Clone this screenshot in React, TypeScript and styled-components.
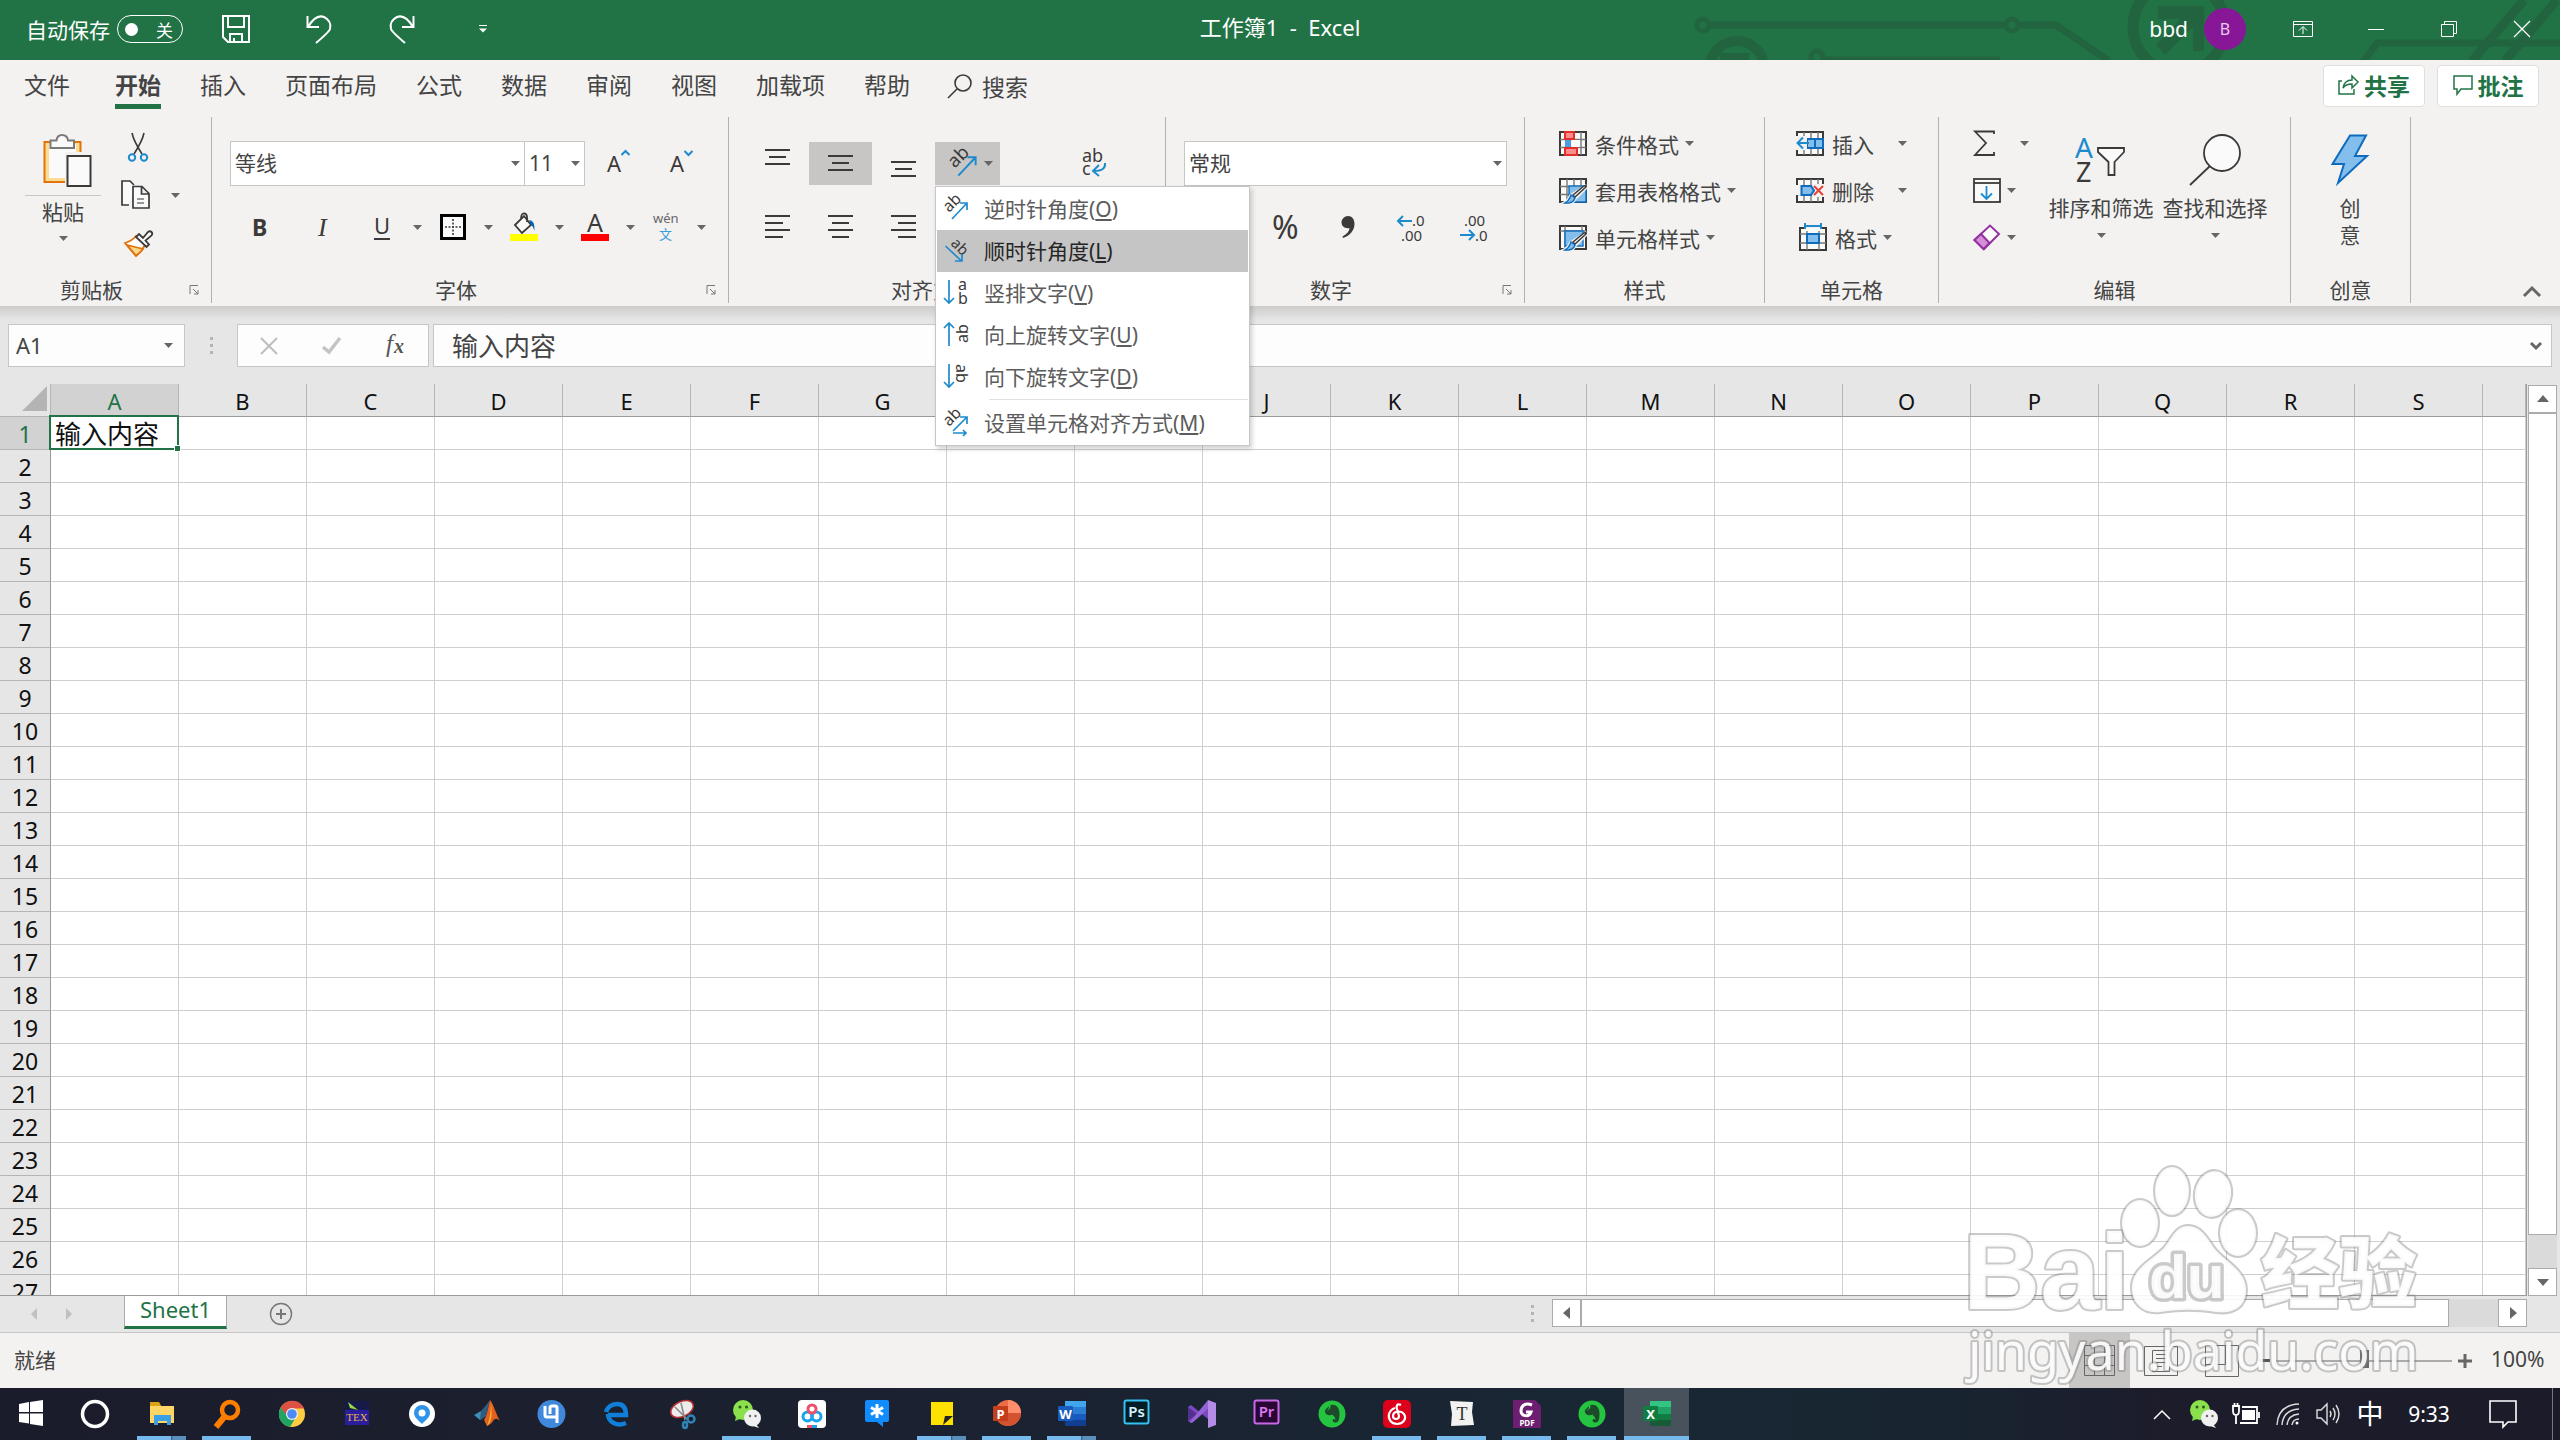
import React from 'react';
import styled, { createGlobalStyle, css } from 'styled-components';

const FONT = '"Noto Sans", "Noto Sans CJK SC", sans-serif';
const INK = '#444444';
const DARK = '#3b3a39';
const BLUE = '#1e8bcd';
const GREEN = '#217346';

const Global = createGlobalStyle`
  *, *::before, *::after { box-sizing: border-box; }
  body { margin: 0; font-family: ${FONT}; font-size: 21px; color: ${INK}; }
  button, input, select { font: inherit; color: inherit; margin: 0; padding: 0; border: 0; background: none; border-radius: 0; outline: 0; }
  button { cursor: pointer; }
  svg { display: block; flex: none; overflow: visible; }
`;

const Page = styled.div`
  position: relative;
  display: flex;
  flex-direction: column;
  height: 100vh;
  overflow: hidden;
  background: #e6e6e6;
`;

const Row = styled.div<{ $gap?: number; $left?: number }>`
  display: flex;
  align-items: center;
  gap: ${(p) => p.$gap ?? 0}px;
  padding-left: ${(p) => p.$left ?? 0}px;
`;

/* ---------- title bar ---------- */
const TitleBar = styled.header`
  position: relative;
  display: grid;
  grid-template-columns: 1fr auto 1fr;
  align-items: center;
  flex: none;
  height: 60px;
  padding-bottom: 2px;
  background: ${GREEN};
  color: #fff;
  overflow: hidden;
`;
const Circuit = styled.svg`
  position: absolute;
  right: 0;
  top: 0;
`;
const TitleText = styled.h1`
  margin: 0;
  padding-bottom: 6px;
  font-size: 22px;
  font-weight: 400;
  white-space: pre;
`;
const AutoSave = styled.label`
  display: flex;
  align-items: center;
  gap: 7px;
  padding-left: 26px;
`;
const Toggle = styled.span`
  display: flex;
  align-items: center;
  justify-content: space-between;
  width: 66px;
  height: 28px;
  padding: 0 9px 0 7px;
  border: 1px solid #fff;
  border-radius: 14px;
  font-size: 17px;
`;
const HiddenCheck = styled.input`
  appearance: none;
  width: 13px;
  height: 13px;
  border-radius: 50%;
  background: #fff;
`;
const QuickButton = styled.button<{ $w: number }>`
  display: flex;
  justify-content: center;
  align-items: center;
  width: ${(p) => p.$w}px;
  height: 58px;
`;
const TitleRight = styled.div`
  position: relative;
  display: flex;
  justify-content: flex-end;
  align-items: center;
  padding-right: 2px;
`;
const UserName = styled.span`
  padding-right: 16px;
  font-size: 21px;
`;
const Avatar = styled.button`
  width: 42px;
  height: 42px;
  margin-right: 20px;
  border-radius: 50%;
  background: #881798;
  color: #e6cdea;
  font-size: 16px;
`;
const WindowButton = styled.button`
  display: flex;
  justify-content: center;
  align-items: center;
  width: 73px;
  height: 56px;
`;

/* ---------- ribbon tabs ---------- */
const TabBar = styled.nav`
  display: flex;
  align-items: flex-start;
  flex: none;
  height: 57px;
  padding: 5px 21px 0 24px;
  background: #f3f2f1;
`;
const TabButton = styled.button<{ $on?: boolean; $first?: boolean }>`
  height: 44px;
  margin-right: ${(p) => (p.$first ? 45 : 39)}px;
  padding-top: 1px;
  font-size: 23px;
  line-height: 36px;
  border-bottom: 5px solid ${(p) => (p.$on ? GREEN : 'transparent')};
  font-weight: ${(p) => (p.$on ? 700 : 400)};
`;
const SearchButton = styled.button`
  display: flex;
  align-items: center;
  gap: 10px;
  height: 42px;
  margin-left: -2px;
  font-size: 23px;
`;
const Spacer = styled.div`
  flex: 1;
`;
const ShareButton = styled.button`
  display: flex;
  justify-content: center;
  align-items: center;
  gap: 5px;
  width: 102px;
  height: 42px;
  margin-left: 12px;
  padding-bottom: 2px;
  border: 1px solid #e1dfdd;
  border-radius: 4px;
  background: #fff;
  color: ${GREEN};
  font-size: 23px;
  font-weight: 700;
`;

/* ---------- ribbon ---------- */
const Ribbon = styled.section`
  position: relative;
  z-index: 2;
  display: flex;
  flex: none;
  height: 189px;
  padding-bottom: 3px;
  background: #f3f2f1;
`;
const GroupBox = styled.div<{ $w: number }>`
  display: flex;
  flex-direction: column;
  flex: none;
  width: ${(p) => p.$w}px;
  border-right: 1px solid #b3b0ad;
`;
const GroupBody = styled.div<{ $left?: number; $gap?: number }>`
  display: flex;
  flex: 1;
  gap: ${(p) => p.$gap ?? 0}px;
  padding-left: ${(p) => p.$left ?? 0}px;
`;
const GroupFoot = styled.div`
  display: flex;
  align-items: center;
  height: 26px;
`;
const GroupLabel = styled.span`
  flex: 1;
  text-align: center;
  line-height: 26px;
`;
const Launcher = styled.button`
  display: flex;
  justify-content: center;
  align-items: center;
  width: 28px;
  height: 22px;
  padding-right: 6px;
`;
const Stack = styled.div<{ $top?: number; $left?: number; $w?: number }>`
  display: flex;
  flex-direction: column;
  width: ${(p) => (p.$w ? p.$w + 'px' : 'auto')};
  padding-top: ${(p) => p.$top ?? 0}px;
  padding-left: ${(p) => p.$left ?? 0}px;
`;
const ToolRow = styled.div<{ $left?: number; $h?: number }>`
  display: flex;
  align-items: center;
  height: ${(p) => p.$h ?? 64}px;
  padding-left: ${(p) => p.$left ?? 0}px;
`;
const Tool = styled.button<{ $w?: number; $h?: number; $on?: boolean }>`
  display: flex;
  justify-content: center;
  align-items: center;
  width: ${(p) => p.$w ?? 63}px;
  height: ${(p) => p.$h ?? 43}px;
  background: ${(p) => (p.$on ? '#c8c6c4' : 'transparent')};
`;
const BigTool = styled.button<{ $w: number }>`
  display: flex;
  flex-direction: column;
  align-items: center;
  width: ${(p) => p.$w}px;
  padding-top: 17px;
  line-height: 27px;
  white-space: nowrap;
`;
const BigIcon = styled.span<{ $left?: number }>`
  display: flex;
  justify-content: center;
  height: 61px;
  padding-left: ${(p) => p.$left ?? 0}px;
`;
const PasteLabel = styled.span`
  width: 100%;
  padding: 3px 0 10px;
  border-top: 1px solid #c8c6c4;
`;
const BigGap = styled.span`
  height: 11px;
`;
const WideTool = styled.button<{ $gap?: number; $left?: number }>`
  display: flex;
  align-items: center;
  height: 47px;
  gap: 8px;
  padding-bottom: 2px;
  padding-left: ${(p) => p.$left ?? 0}px;
  & > svg:last-child { margin-left: ${(p) => (p.$gap ?? 6) - 8}px; }
`;
const ComboBox = styled.label<{ $w: number; $joined?: boolean }>`
  display: grid;
  align-items: center;
  width: ${(p) => p.$w}px;
  height: 45px;
  border: 1px solid #c8c6c4;
  border-left-width: ${(p) => (p.$joined ? 0 : 1)}px;
  background: #fff;
  & > select, & > svg { grid-area: 1 / 1; }
  & > svg { justify-self: end; margin-right: 4px; pointer-events: none; }
`;
const Choice = styled.select`
  appearance: none;
  width: 100%;
  height: 43px;
  padding-left: 4px;
`;
const CollapseArea = styled.div`
  display: flex;
  flex: 1;
  justify-content: flex-end;
  align-items: flex-end;
  padding: 0 19px 5px 0;
`;

/* ---------- orientation menu ---------- */
const MenuAnchor = styled.div`
  position: relative;
`;
const Menu = styled.ul`
  position: absolute;
  left: 0;
  top: 44px;
  width: 315px;
  margin: 0;
  padding: 1px;
  list-style: none;
  border: 1px solid #c6c6c6;
  background: #fff;
  box-shadow: 2px 3px 5px rgba(0, 0, 0, 0.18);
`;
const MenuItem = styled.button<{ $on?: boolean }>`
  display: flex;
  align-items: center;
  gap: 15px;
  width: 100%;
  height: 42px;
  padding: 0 0 2px 7px;
  background: ${(p) => (p.$on ? '#c5c5c5' : 'transparent')};
  color: ${(p) => (p.$on ? '#262626' : '#5c5c5c')};
  white-space: nowrap;
`;
const MenuRule = styled.li`
  height: 1px;
  margin: 1px 0 2px 52px;
  background: #e1e1e1;
`;

/* ---------- formula bar ---------- */
const FormulaBar = styled.section`
  display: flex;
  flex: none;
  height: 78px;
  padding: 18px 8px 16px;
  background: linear-gradient(#cdcccb, #e6e6e6 14px);
`;
const Field = styled.div<{ $w?: number }>`
  display: flex;
  align-items: center;
  flex: ${(p) => (p.$w ? 'none' : '1')};
  width: ${(p) => (p.$w ? p.$w + 'px' : 'auto')};
  height: 43px;
  border: 1px solid #c6c6c6;
  background: #fdfdfd;
`;
const NameInput = styled.input`
  flex: 1;
  min-width: 0;
  padding: 0 0 2px 7px;
  font-size: 22px;
`;
const FormulaInput = styled.input`
  flex: 1;
  padding: 0 0 2px 18px;
  font-size: 26px;
`;
const Grip = styled.div<{ $w: number }>`
  display: flex;
  justify-content: center;
  align-items: center;
  width: ${(p) => p.$w}px;
`;

/* ---------- sheet ---------- */
const SheetArea = styled.main`
  display: flex;
  flex: 1;
  min-height: 0;
`;
const GridClip = styled.div`
  flex: 1;
  overflow: hidden;
  border-right: 1px solid #9b9b9b;
  border-bottom: 1px solid #9b9b9b;
  background: #fff;
`;
const Grid = styled.table`
  width: 100%;
  table-layout: fixed;
  border-spacing: 0;
  color: #111;
`;
const ColHead = styled.th<{ $on?: boolean }>`
  height: 33px;
  padding: 2px 0 0;
  font-size: 22px;
  line-height: 30px;
  font-weight: 400;
  border-right: 1px solid #b5b5b5;
  border-bottom: 1px solid #9b9b9b;
  background: ${(p) => (p.$on ? '#d2d2d2' : '#e6e6e6')};
  color: ${(p) => (p.$on ? GREEN : '#111')};
`;
const CornerHead = styled.th`
  padding: 0 3px 3px 0;
  background: #e6e6e6;
  border-bottom: 1px solid #b5b5b5;
  border-right: 1px solid #b5b5b5;
  & > svg { margin-left: auto; }
`;
const RowHead = styled.th<{ $on?: boolean }>`
  height: 33px;
  padding: 2px 0 0;
  font-size: 23px;
  line-height: 30px;
  font-weight: 400;
  border-right: 1px solid #9b9b9b;
  border-bottom: 1px solid #b5b5b5;
  background: ${(p) => (p.$on ? '#d2d2d2' : '#e6e6e6')};
  color: ${(p) => (p.$on ? GREEN : '#111')};
`;
const Cell = styled.td<{ $active?: boolean }>`
  padding: 2px 0 0 4px;
  line-height: 30px;
  font-size: 26px;
  white-space: nowrap;
  background: #fff;
  border-right: 1px solid #cfcfcf;
  border-bottom: 1px solid #cfcfcf;
  ${(p) =>
    p.$active &&
    css`
      position: relative;
      &::before {
        content: '';
        position: absolute;
        inset: -2px -1px -1px -2px;
        border: 2px solid ${GREEN};
      }
      &::after {
        content: '';
        position: absolute;
        right: -3px;
        bottom: -3px;
        width: 7px;
        height: 7px;
        border: 1px solid #fff;
        background: ${GREEN};
      }
    `}
`;
const VScroll = styled.div`
  display: flex;
  flex-direction: column;
  width: 33px;
  padding: 1px 3px 0 1px;
`;
const ScrollButton = styled.button`
  display: flex;
  justify-content: center;
  align-items: center;
  flex: none;
  width: 29px;
  height: 28px;
  border: 1px solid #ababab;
  background: #fff;
`;
const ScrollThumb = styled.div`
  flex: 1;
  border: 1px solid #ababab;
  background: #fff;
`;
const ScrollTrack = styled.div<{ $w?: number; $h?: number }>`
  flex: none;
  width: ${(p) => (p.$w ? p.$w + 'px' : 'auto')};
  height: ${(p) => (p.$h ? p.$h + 'px' : 'auto')};
  background: #dadada;
`;
const SheetBar = styled.section`
  display: flex;
  flex: none;
  height: 37px;
  padding-right: 33px;
  border-bottom: 1px solid #c6c6c6;
`;
const SheetNav = styled.div`
  display: flex;
  align-items: center;
  gap: 26px;
  width: 124px;
  padding-left: 28px;
`;
const SheetTab = styled.button`
  width: 103px;
  height: 33px;
  padding-bottom: 4px;
  border: 1px solid #ababab;
  border-top: 0;
  border-bottom: 3px solid ${GREEN};
  background: #fff;
  color: ${GREEN};
  font-size: 22px;
  line-height: 26px;
`;
const AddSheet = styled.button`
  display: flex;
  align-items: center;
  padding-left: 42px;
`;
const HScroll = styled.div`
  display: flex;
  width: 975px;
  height: 28px;
  margin-top: 3px;
`;

/* ---------- status bar ---------- */
const StatusBar = styled.footer`
  display: flex;
  align-items: center;
  flex: none;
  height: 55px;
  padding: 0 15px 0 14px;
  background: #f3f2f1;
`;
const StatusText = styled.span`
  padding-bottom: 3px;
`;
const ViewButton = styled.button<{ $on?: boolean }>`
  display: flex;
  justify-content: center;
  align-items: center;
  width: 61px;
  height: 55px;
  background: ${(p) => (p.$on ? '#c8c6c4' : 'transparent')};
`;
const ZoomButton = styled.button<{ $w: number }>`
  display: flex;
  justify-content: center;
  width: ${(p) => p.$w}px;
`;
const ZoomRange = styled.input`
  appearance: none;
  width: 176px;
  height: 20px;
  &::-webkit-slider-runnable-track { height: 2px; background: #ababab; }
  &::-webkit-slider-thumb {
    appearance: none;
    width: 9px;
    height: 18px;
    margin-top: -10px;
    background: #6b6b6b;
  }
`;
const ZoomText = styled.span`
  width: 54px;
  margin-left: 13px;
  padding-bottom: 3px;
  white-space: nowrap;
`;

/* ---------- task bar ---------- */
const TaskBar = styled.footer`
  display: flex;
  flex: none;
  height: 52px;
  background: linear-gradient(90deg, #1b1c2b 0%, #1b2130 35%, #192734 65%, #182531 75%, #1d1c2b 85%, #1c1b29 100%);
  color: #fff;
`;
const TaskButton = styled.button<{ $w?: number; $on?: boolean }>`
  display: flex;
  flex-direction: column;
  align-items: center;
  justify-content: space-between;
  width: ${(p) => p.$w ?? 65}px;
  padding-top: 11px;
  background: ${(p) => (p.$on ? 'rgba(255,255,255,0.2)' : 'transparent')};
`;
const Underline = styled.span<{ $kind: number }>`
  width: ${(p) => (p.$kind === 3 ? '100%' : '49px')};
  height: 4px;
  background: ${(p) =>
    p.$kind === 0
      ? 'transparent'
      : p.$kind === 2
      ? 'linear-gradient(90deg, #76b9ed 34px, #34516b 34px, #5a8fbc 36px)'
      : '#76b9ed'};
`;
const TrayButton = styled.button<{ $w: number }>`
  display: flex;
  justify-content: center;
  align-items: center;
  width: ${(p) => p.$w}px;
  font-size: 21px;
`;
const InputMode = styled.span`
  font-size: 27px;
  line-height: 50px;
`;
const DesktopPeek = styled.button`
  width: 8px;
  margin-left: 14px;
  border-left: 1px solid #77777f;
`;

const Watermark = styled.svg`
  position: absolute;
  right: 120px;
  bottom: 50px;
  z-index: 3;
  pointer-events: none;
`;

/* ---------- icons ---------- */
type IconProps = { w: number; h: number; children: React.ReactNode; c?: string; s?: number };
const Icon = ({ w, h, children, c = DARK, s = 2 }: IconProps) => (
  <svg width={w} height={h} viewBox={`0 0 ${w} ${h}`} fill="none" stroke={c} strokeWidth={s} aria-hidden="true">
    {children}
  </svg>
);
const Tri = () => (
  <svg width="9" height="5" viewBox="0 0 9 5" aria-hidden="true">
    <path d="M0 0h9L4.500 5z" fill="#666" />
  </svg>
);
const Lines = ({ rows }: { rows: [number, number][] }) => (
  <Icon w={25} h={rows.length * 7 - 4}>
    {rows.map(([x, w], i) => (
      <path key={i} d={`M${x} ${i * 7 + 1}h${w}`} />
    ))}
  </Icon>
);
const T = ({ x, y, size, fill = DARK, children, ...rest }: any) => (
  <text x={x} y={y} fontSize={size} fill={fill} stroke="none" {...rest}>
    {children}
  </text>
);

const PasteIcon = () => (
  <Icon w={50} h={54}>
    <rect x="1.500" y="8" width="36" height="40" fill="#fbdc93" stroke="#e3720b" />
    <rect x="6" y="10" width="27" height="34" fill="#fafafa" stroke="none" />
    <path d="M7.500 14V6.500h6C14 2.500 16 1 19 1s5.500 1.500 6 5.500h6V14z" fill="#fafafa" stroke="#7c7a78" />
    <rect x="22" y="18" width="28" height="36" fill="#f3f2f1" stroke="none" />
    <rect x="24.500" y="22" width="23" height="30" fill="#fafafa" />
  </Icon>
);
const CutIcon = () => (
  <Icon w={20} h={29} s={1.6}>
    <path d="M4 0c1 5 3 10 10 21M16 0c-1 5-3 10-10 21" />
    <circle cx="4" cy="24.500" r="3.200" stroke={BLUE} strokeWidth="2" />
    <circle cx="16" cy="24.500" r="3.200" stroke={BLUE} strokeWidth="2" />
  </Icon>
);
const CopyIcon = () => (
  <Icon w={29} h={30} s={1.7}>
    <path d="M8 25H1V1h8l4 4" fill="#fafafa" />
    <path d="M12 6.500h9l7 7V28H12zM20.500 7v7H28" fill="#fafafa" />
    <path d="M16 19h7M16 23h7" stroke="#777" />
  </Icon>
);
const BrushIcon = () => (
  <Icon w={29} h={27} s={1.8}>
    <path d="M1 13q7-2 11-7l9 9q-3 6-9 11z" fill="#fff" stroke="#e3720b" />
    <path d="M3 15l16 4q-3 4-7 6.500z" fill="#fbd98c" stroke="#e3720b" />
    <path d="M12 7l3-3 4 4 5-6q2-1.500 3.500 0t0 3.500l-6 5 3.500 4-2.500 2.500z" fill="#fafafa" />
  </Icon>
);
const GrowIcon = ({ down }: { down?: boolean }) => (
  <Icon w={24} h={28} c={BLUE}>
    <T x={0} y={23} size={22}>A</T>
    <path d={down ? 'M14.500 2l4 4 4-4' : 'M14.500 6l4-4 4 4'} />
  </Icon>
);
const BorderIcon = () => (
  <Icon w={26} h={26}>
    <rect x="1.500" y="1.500" width="23" height="23" fill="#fafafa" stroke="#000" strokeWidth="3" />
    <path d="M5 13h16M13 5v16" strokeDasharray="2 1.500" strokeWidth="1.600" />
  </Icon>
);
const FillIcon = () => (
  <Icon w={28} h={28} s={1.8}>
    <path d="M5 12L14 3l7 9-9 8zM11 6q0-6 3.500-5.500T17 9" fill="#fafafa" />
    <path d="M19 7q6 0 5.500 11-1.500-5-3.500-6z" fill="#0063b1" stroke="none" />
    <path d="M0 21h28v7H0z" fill="#ff0" stroke="none" />
  </Icon>
);
const FontColorIcon = () => (
  <Icon w={28} h={28}>
    <T x={6} y={19} size={25}>A</T>
    <path d="M0 21h28v7H0z" fill="#f00" stroke="none" />
  </Icon>
);
const PinyinIcon = () => (
  <Icon w={26} h={30}>
    <T x={0} y={11} size={13} fill="#666">wén</T>
    <T x={6} y={27} size={13} fill="#3d9bd8">文</T>
  </Icon>
);

const OrientIcon = ({ kind, big }: { kind: string; big?: boolean }) => {
  const k = big ? 1.15 : 1;
  return (
    <svg width={Math.round(25 * k)} height={Math.round(26 * k)} viewBox="0 0 25 26" fill="none" stroke={BLUE} strokeWidth="1.700" aria-hidden="true">
      {(kind === 'ccw' || kind === 'fmt') && (
        <g>
          <T x={0} y={0} size={16} transform="translate(5 18) rotate(-45)">ab</T>
          {kind === 'ccw' ? <path d="M8 24L23 8M16 8h7v7" /> : <path d="M9 22L23 8M16 8h7v7M9 24h13M19 21l3 3-3 3" />}
        </g>
      )}
      {kind === 'cw' && (
        <g>
          <T x={0} y={0} size={15} transform="translate(6 7) rotate(45)">ab</T>
          <path d="M1.500 9l16 15M18 17v7h-7" />
        </g>
      )}
      {kind === 'vert' && (
        <g>
          <T x={14} y={11} size={16}>a</T>
          <T x={14} y={25} size={16}>b</T>
          <path d="M5 1v23M0 19l5 5 5-5" />
        </g>
      )}
      {kind === 'up' && (
        <g>
          <T x={0} y={0} size={16} transform="translate(24 22) rotate(-90)">ab</T>
          <path d="M5 25V2M0 7l5-5 5 5" />
        </g>
      )}
      {kind === 'down' && (
        <g>
          <T x={0} y={0} size={16} transform="translate(12 1) rotate(90)">ab</T>
          <path d="M5 1v23M0 19l5 5 5-5" />
        </g>
      )}
    </svg>
  );
};
const WrapIcon = () => (
  <Icon w={25} h={28} c={BLUE}>
    <T x={0} y={13} size={18}>ab</T>
    <T x={0} y={26} size={18}>c</T>
    <path d="M23 14q1 8-11 8M17 16l-6 6 6 5" />
  </Icon>
);
const IndentIcon = () => (
  <Icon w={25} h={24}>
    <path d="M0 1h25M12 8h13M12 15h13M0 22h25M8 7l-5 5 5 5" />
  </Icon>
);
const MergeIcon = () => (
  <Icon w={26} h={24}>
    <rect x="1" y="1" width="24" height="22" />
    <path d="M1 7h24M1 17h24M6 12h14" />
  </Icon>
);
const DecimalIcon = ({ inc }: { inc?: boolean }) => (
  <Icon w={28} h={28} c={BLUE}>
    {inc ? (
      <g>
        <T x={15} y={13} size={15}>.0</T>
        <T x={4} y={28} size={15}>.00</T>
        <path d="M15 8H1M6 3L1 8l5 5" />
      </g>
    ) : (
      <g>
        <T x={4} y={13} size={15}>.00</T>
        <T x={15} y={28} size={15}>.0</T>
        <path d="M0 22h14M9 17l5 5-5 5" />
      </g>
    )}
  </Icon>
);
const GridBase = () => (
  <g>
    <rect x="1" y="1" width="26" height="23" fill="#fafafa" />
    <path d="M1 8.500h26M1 16.500h26M8 1v23M15 1v23M22 1v23" stroke="#777" strokeWidth="1.400" />
  </g>
);
const CondIcon = () => (
  <Icon w={28} h={25}>
    <GridBase />
    <rect x="6" y="9" width="6" height="8" fill="#4a9ee0" stroke="none" />
    <rect x="6" y="1" width="9" height="7" fill="#ff8c8c" stroke="#e03028" />
    <rect x="6" y="17" width="12" height="7" fill="#ff8c8c" stroke="#e03028" />
    <rect x="13" y="9" width="8" height="7" fill="#fafafa" stroke="none" />
  </Icon>
);
const TableStyleIcon = ({ cell }: { cell?: boolean }) => (
  <Icon w={28} h={25}>
    {cell ? (
      <g>
        <rect x="1" y="1" width="26" height="23" fill="#fafafa" />
        <path d="M1 6h26M6 1v23M23 1v6" stroke="#777" strokeWidth="1.400" />
        <rect x="6" y="6" width="18" height="15" fill="#83beec" stroke="#0f6cbd" strokeWidth="1.400" />
      </g>
    ) : (
      <g>
        <GridBase />
        <rect x="10" y="8" width="17" height="16" fill="#83beec" stroke="#0f6cbd" strokeWidth="1.400" />
      </g>
    )}
    <path d="M28 8L16 20q-3 6-10 5 4-2 6-7z" fill="#f3f2f1" stroke="#f3f2f1" strokeWidth="4" />
    <path d="M27 9L16 19l-2-2L25 8q3-1 2 1z" fill="#fafafa" strokeWidth="1.500" />
    <path d="M12 17l4 3q-2 6-10 5 4-2 6-8z" fill="#83beec" stroke="#0f6cbd" strokeWidth="1.400" />
  </Icon>
);
const InsertIcon = () => (
  <Icon w={28} h={25}>
    <GridBase />
    <rect x="11" y="8" width="16" height="9" fill="#83beec" stroke="#0f6cbd" />
    <path d="M19 8v9" stroke="#0f6cbd" />
    <path d="M0 5h11v14H0z" fill="#f3f2f1" stroke="none" />
    <path d="M13 12H1.500M7 6.500L1.500 12 7 17.500" stroke={BLUE} />
  </Icon>
);
const DeleteIcon = () => (
  <Icon w={28} h={25}>
    <GridBase />
    <path d="M0 7h5v10H0zM16 6h12v13H16z" fill="#f3f2f1" stroke="none" />
    <path d="M5.500 8H15l3 4.500-3 4.500H5.500z" fill="#83beec" stroke="#0f6cbd" />
    <path d="M18 8l9 9M27 8l-9 9" stroke="#e8403a" />
  </Icon>
);
const FormatIcon = () => (
  <Icon w={28} h={29}>
    <path d="M6 5H1v22h26V5h-5" fill="#fafafa" />
    <path d="M1 11h26M1 20h26M8 8v19M20 8v19" stroke="#777" strokeWidth="1.400" />
    <rect x="8" y="11" width="12" height="9" fill="#83beec" stroke="#0f6cbd" />
    <path d="M6 3h16M6 0v6M22 0v6" stroke={BLUE} />
  </Icon>
);
const SigmaIcon = () => (
  <Icon w={23} h={27} s={1.8}>
    <path d="M21 4V1.500H2L13 13 2 25h19v-3" />
  </Icon>
);
const FillDownIcon = () => (
  <Icon w={28} h={25} s={1.8}>
    <rect x="1" y="1" width="26" height="23" fill="#fafafa" />
    <path d="M1 5h26" />
    <path d="M13.500 8v13M8 15.500l5.500 5.500 5.500-5.500" stroke={BLUE} />
  </Icon>
);
const EraserIcon = () => (
  <Icon w={28} h={27} c="#9430a0">
    <path d="M1.500 16L17 1.500 26 10 11 25z" fill="#fafafa" />
    <path d="M1.500 16L8 10l8.500 9-6 6z" fill="#d58fd8" />
  </Icon>
);
const SortIcon = () => (
  <Icon w={52} h={52} s={1.8}>
    <T x={0} y={24} size={28} fill={BLUE}>A</T>
    <T x={1} y={48} size={27}>Z</T>
    <path d="M23 14h26v4L39.500 28v13h-6V28L23 18z" fill="#fafafa" />
  </Icon>
);
const FindIcon = () => (
  <Icon w={52} h={52} s={1.8}>
    <circle cx="33" cy="19" r="18" fill="#fafafa" />
    <path d="M21 32L1 51" />
  </Icon>
);
const BoltIcon = () => (
  <Icon w={38} h={51} c="#0f6cbd">
    <path d="M19 1.500h16L24 22h12L7 49l6-19H1.500z" fill="#83beec" />
  </Icon>
);
const LauncherIcon = () => (
  <Icon w={10} h={10} s={1} c="#777">
    <path d="M1 9V.500h8M4 4l5 5M9 5v4H5" />
  </Icon>
);
const ArrowHead = ({ d, c = '#666' }: { d: string; c?: string }) => (
  <svg width="12" height="14" viewBox="0 0 12 14" fill={c} aria-hidden="true">
    <path d={d} />
  </svg>
);
const Dots = () => (
  <Icon w={3} h={18} s={0}>
    <path d="M0 0h3v3H0zM0 7h3v3H0zM0 14h3v3H0z" fill="#b4b4b4" />
  </Icon>
);

/* ---------- ribbon parts ---------- */
const Group = ({ w, label, launcher, left, gap, children }: any) => (
  <GroupBox $w={w}>
    <GroupBody $left={left} $gap={gap}>{children}</GroupBody>
    <GroupFoot>
      <GroupLabel>{label}</GroupLabel>
      {launcher && (
        <Launcher aria-label={label}>
          <LauncherIcon />
        </Launcher>
      )}
    </GroupFoot>
  </GroupBox>
);
const Split = ({ name, children }: { name: string; children: React.ReactNode }) => (
  <>
    <Tool $w={57} aria-label={name}>{children}</Tool>
    <Tool $w={14} aria-label={name}><Tri /></Tool>
  </>
);

const menuItems: [string, string, string][] = [
  ['ccw', '逆时针角度', 'O'],
  ['cw', '顺时针角度', 'L'],
  ['vert', '竖排文字', 'V'],
  ['up', '向上旋转文字', 'U'],
  ['down', '向下旋转文字', 'D'],
  ['fmt', '设置单元格对齐方式', 'M'],
];

const RibbonView = () => (
  <Ribbon>
    <Group w={212} label="剪贴板" launcher left={25} gap={11}>
      <BigTool $w={76}>
        <BigIcon $left={10}><PasteIcon /></BigIcon>
        <PasteLabel>粘贴</PasteLabel>
        <Tri />
      </BigTool>
      <Stack $top={6}>
        <ToolRow $h={48}><Tool $w={52} aria-label="剪切"><CutIcon /></Tool></ToolRow>
        <ToolRow $h={48}>
          <Tool $w={46} aria-label="复制"><CopyIcon /></Tool>
          <Tool $w={34} aria-label="复制"><Tri /></Tool>
        </ToolRow>
        <ToolRow $h={48}><Tool $w={52} aria-label="格式刷"><BrushIcon /></Tool></ToolRow>
      </Stack>
    </Group>

    <Group w={517} label="字体" launcher left={18}>
      <Stack $top={14}>
        <ToolRow>
          <ComboBox $w={295}>
            <Choice aria-label="字体"><option>等线</option></Choice>
            <Tri />
          </ComboBox>
          <ComboBox $w={60} $joined>
            <Choice aria-label="字号"><option>11</option></Choice>
            <Tri />
          </ComboBox>
          <Row $left={2}>
            <Tool aria-label="增大字号"><GrowIcon /></Tool>
            <Tool aria-label="减小字号"><GrowIcon down /></Tool>
          </Row>
        </ToolRow>
        <ToolRow>
          <Tool $w={60} aria-label="加粗">
            <Icon w={16} h={24}><T x={0} y={21} size={23} fontWeight="700">B</T></Icon>
          </Tool>
          <Tool $w={63} aria-label="倾斜">
            <Icon w={14} h={24}><T x={3} y={21} size={26} fontStyle="italic" fontFamily="Liberation Serif">I</T></Icon>
          </Tool>
          <Split name="下划线">
            <Icon w={18} h={26}>
              <T x={1} y={20} size={22}>U</T>
              <path d="M1 25h16" />
            </Icon>
          </Split>
          <Split name="边框"><BorderIcon /></Split>
          <Split name="填充颜色"><FillIcon /></Split>
          <Split name="字体颜色"><FontColorIcon /></Split>
          <Split name="拼音"><PinyinIcon /></Split>
        </ToolRow>
      </Stack>
    </Group>

    <Group w={437} label="对齐方式" launcher left={17}>
      <Stack $top={14}>
        <ToolRow>
          <Tool aria-label="顶端对齐"><Stack><Lines rows={[[0, 25], [4, 17], [0, 25]]} /><ToolRow $h={11} /></Stack></Tool>
          <Tool $on aria-label="垂直居中"><Lines rows={[[0, 25], [4, 17], [0, 25]]} /></Tool>
          <Tool aria-label="底端对齐"><Stack $top={12}><Lines rows={[[0, 25], [4, 17], [0, 25]]} /></Stack></Tool>
          <MenuAnchor>
            <Tool $w={65} $on aria-label="方向" aria-expanded="true">
              <Row $gap={6} $left={7}><OrientIcon kind="ccw" big /><Tri /></Row>
            </Tool>
            <Menu>
              {menuItems.map(([kind, text, key], i) => (
                <React.Fragment key={key}>
                  {i === 5 && <MenuRule />}
                  <li>
                    <MenuItem $on={i === 1}>
                      <OrientIcon kind={kind} />
                      <span>{text}(<u>{key}</u>)</span>
                    </MenuItem>
                  </li>
                </React.Fragment>
              ))}
            </Menu>
          </MenuAnchor>
          <Row $left={63}><Tool aria-label="自动换行"><WrapIcon /></Tool></Row>
        </ToolRow>
        <ToolRow>
          <Tool aria-label="左对齐"><Lines rows={[[0, 25], [0, 18], [0, 25], [0, 18]]} /></Tool>
          <Tool aria-label="居中"><Lines rows={[[0, 25], [4, 17], [0, 25], [4, 17]]} /></Tool>
          <Tool aria-label="右对齐"><Lines rows={[[0, 25], [7, 18], [0, 25], [7, 18]]} /></Tool>
          <Tool aria-label="减少缩进"><IndentIcon /></Tool>
          <Tool aria-label="增加缩进"><IndentIcon /></Tool>
          <Tool aria-label="合并"><MergeIcon /></Tool>
        </ToolRow>
      </Stack>
    </Group>

    <Group w={359} label="数字" launcher left={18}>
      <Stack $top={14}>
        <ToolRow>
          <ComboBox $w={323}>
            <Choice aria-label="数字格式"><option>常规</option></Choice>
            <Tri />
          </ComboBox>
        </ToolRow>
        <ToolRow $left={6}>
          <Tool aria-label="会计格式"><MergeIcon /></Tool>
          <Tool aria-label="百分比">
            <Icon w={28} h={28}><T x={1} y={26} size={32}>%</T></Icon>
          </Tool>
          <Tool aria-label="千位分隔">
            <svg width="14" height="24" viewBox="0 0 14 24" aria-hidden="true">
              <path d="M7 1c4 0 6.500 3 6.500 8C13.500 15 9 21 2 23l-.5-1.500C6 19 8.500 16 8.500 13 4 14 .5 11 .5 7.500S3.500 1 7 1z" fill={DARK} />
            </svg>
          </Tool>
          <Tool aria-label="增加小数位数"><DecimalIcon inc /></Tool>
          <Tool aria-label="减少小数位数"><DecimalIcon /></Tool>
        </ToolRow>
      </Stack>
    </Group>

    <Group w={240} label="样式" left={34}>
      <Stack $top={4}>
        <WideTool><CondIcon />条件格式<Tri /></WideTool>
        <WideTool><TableStyleIcon />套用表格格式<Tri /></WideTool>
        <WideTool><TableStyleIcon cell />单元格样式<Tri /></WideTool>
      </Stack>
    </Group>

    <Group w={174} label="单元格" left={31}>
      <Stack $top={4}>
        <WideTool $gap={24}><InsertIcon />插入<Tri /></WideTool>
        <WideTool $gap={24}><DeleteIcon />删除<Tri /></WideTool>
        <WideTool $left={3}><FormatIcon />格式<Tri /></WideTool>
      </Stack>
    </Group>

    <Group w={352} label="编辑" left={34} gap={4}>
      <Stack $top={4} $w={69}>
        <WideTool $gap={24} aria-label="自动求和"><SigmaIcon /><Tri /></WideTool>
        <WideTool aria-label="填充"><FillDownIcon /><Tri /></WideTool>
        <WideTool aria-label="清除"><EraserIcon /><Tri /></WideTool>
      </Stack>
      <BigTool $w={110}>
        <BigIcon><SortIcon /></BigIcon>
        排序和筛选
        <BigGap />
        <Tri />
      </BigTool>
      <BigTool $w={110}>
        <BigIcon><FindIcon /></BigIcon>
        查找和选择
        <BigGap />
        <Tri />
      </BigTool>
    </Group>

    <Group w={120} label="创意" left={29}>
      <BigTool $w={60}>
        <BigIcon><BoltIcon /></BigIcon>
        <span>创</span>
        <span>意</span>
      </BigTool>
    </Group>

    <CollapseArea>
      <button aria-label="折叠功能区">
        <Icon w={18} h={12} c="#666" s={3}><path d="M1 10l8-8 8 8" /></Icon>
      </button>
    </CollapseArea>
  </Ribbon>
);

/* ---------- task bar icons ---------- */
const Evernote = () => (
  <Icon w={30} h={30} s={0}>
    <circle cx="15" cy="15" r="13.500" fill="#25c440" />
    <path d="M12 7l-4 4c2 1 4 0 4-4z" fill="#1d4a2b" />
    <path d="M13.500 6c5-1 9 2 9 9 0 5-1 8.500-4 8.500-2 0-3.500-1-2.500-3.500l2.500.5c0-2.500-2-3-3-5-3 2-8.500 0-7.500-4.500 3 1 6-1 5.500-5z" fill="#1d4a2b" />
  </Icon>
);
const WeChat = () => (
  <Icon w={30} h={30} s={0}>
    <path d="M4 17l-1 5 5-2z" fill="#7ed34b" />
    <circle cx="11" cy="11" r="10" fill="#8be04e" />
    <circle cx="8" cy="8" r="1.500" fill="#2d5b1c" /><circle cx="14.500" cy="8" r="1.500" fill="#2d5b1c" />
    <circle cx="20.500" cy="19" r="8.500" fill="#f0f0f0" /><path d="M24 25l3 4-6-2z" fill="#f0f0f0" />
    <circle cx="18" cy="17" r="1.200" fill="#666" /><circle cx="23.500" cy="17" r="1.200" fill="#666" />
  </Icon>
);
const Office = ({ letter, colors, round }: { letter: string; colors: string[]; round?: boolean }) => (
  <Icon w={30} h={30} s={0}>
    {round ? (
      <g>
        <circle cx="16" cy="14" r="13" fill={colors[0]} />
        <path d="M16 1a13 13 0 0 1 13 13H16z" fill={colors[1]} />
        <path d="M3 14h26a13 13 0 0 1-26 0z" fill={colors[2]} />
      </g>
    ) : (
      <g>
        <path d="M8 2h21v7H8z" fill={colors[0]} />
        <path d="M8 8h21v7H8z" fill={colors[1]} />
        <path d="M8 15h21v6H8z" fill={colors[2]} />
        <path d="M8 21h21v6H8z" fill={colors[3]} />
      </g>
    )}
    <rect x="1" y="7" width="15" height="15" rx="1" fill={colors[4]} />
    <T x={8.5} y={19.5} size={13} fill="#fff" fontWeight="700" textAnchor="middle">{letter}</T>
  </Icon>
);
const Adobe = ({ text, bg, fg, ink }: { text: string; bg: string; fg: string; ink: string }) => (
  <Icon w={28} h={26} c={fg}>
    <rect x="1.500" y="1.500" width="24" height="23" rx="2" fill={bg} />
    <T x={13.5} y={18} size={15} fill={ink} fontWeight="600" textAnchor="middle">{text}</T>
  </Icon>
);

const taskApps: { name: string; line: number; icon: React.ReactNode }[] = [
  {
    name: '文件资源管理器', line: 2, icon: (
      <Icon w={28} h={28} s={0}>
        <path d="M2 4h9l2 3h13v17H2z" fill="#ffd566" /><path d="M2 3h9l2 4H2z" fill="#dba213" />
        <path d="M6 26V16h17v10h-4v-4h-9v4z" fill="#3a9fe5" />
      </Icon>
    ),
  },
  {
    name: '搜索', line: 1, icon: (
      <Icon w={30} h={30} c="#ff7e00" s={4.5}>
        <circle cx="18" cy="11" r="8" /><path d="M13 17L4 28" strokeWidth="6" />
      </Icon>
    ),
  },
  {
    name: 'Chrome', line: 0, icon: (
      <Icon w={28} h={30} s={0}>
        <circle cx="14" cy="15" r="13" fill="#ffcd42" />
        <path d="M14 15L2.700 8.500A13 13 0 0 0 12 28l6-10z" fill="#1fa463" />
        <path d="M2.700 8.500A13 13 0 0 1 26 9.500H14L9 17z" fill="#dd5144" />
        <circle cx="14" cy="15" r="6" fill="#f1f1f1" /><circle cx="14" cy="15" r="4.800" fill="#4c8bf5" />
      </Icon>
    ),
  },
  {
    name: 'TeX', line: 0, icon: (
      <Icon w={26} h={28} s={0}>
        <rect x="1" y="2" width="24" height="24" fill="#2a1d9e" /><rect x="1" y="2" width="24" height="9" fill="#151a4a" />
        <path d="M4 3l5 4 5 4-8-2z" fill="#9bdc3c" />
        <T x={13} y={22} size={11} fill="#e2b93b" textAnchor="middle" fontFamily="Liberation Serif">TEX</T>
      </Icon>
    ),
  },
  {
    name: '地图', line: 0, icon: (
      <Icon w={28} h={30} s={0}>
        <circle cx="14" cy="15" r="13" fill="#fff" />
        <path d="M14 25c-4-4-8-7-8-11a8 8 0 0 1 16 0c0 4-4 7-8 11z" fill="#2f93ea" /><circle cx="14" cy="14" r="3.500" fill="#fff" />
      </Icon>
    ),
  },
  {
    name: 'MATLAB', line: 0, icon: (
      <Icon w={28} h={28} s={0}>
        <path d="M1 16l7-4 4 4-5 5z" fill="#3e8fb5" /><path d="M8 12l6-7 3-4-4 16-5 4-1-1z" fill="#2d5d83" />
        <path d="M17 1c3 3 6 14 10 21-3-3-5-3-7 0-2 3-4 4-6 5l-3-6c3-4 4-12 6-20z" fill="#e5601c" />
        <path d="M17 1c2 7 0 19-3 26 5-4 6-14 3-26z" fill="#f6b13c" />
      </Icon>
    ),
  },
  {
    name: '有道', line: 0, icon: (
      <Icon w={29} h={30} c="#fff" s={3}>
        <circle cx="14.500" cy="15" r="14" fill="#4088dc" stroke="none" />
        <path d="M8 7v9q0 2 2 2h9M13 15V9q0-2 2-2h3q2 0 2 2v15" />
      </Icon>
    ),
  },
  {
    name: 'Edge', line: 0, icon: (
      <Icon w={28} h={30} c="#0f7fd9" s={4.5}>
        <path d="M5 16h18c0-7-3-11-9-11S4 9 3 13M5 15c0 8 9 13 18 9" />
      </Icon>
    ),
  },
  {
    name: '截图', line: 0, icon: (
      <Icon w={30} h={30} c="#b53033" s={1.5}>
        <ellipse cx="15" cy="10" rx="12" ry="7.500" transform="rotate(-25 15 10)" fill="#ececec" />
        <path d="M8 8l12 12M14 4l4 17" stroke="#888" /><circle cx="24" cy="20" r="3.500" stroke="#3183b8" strokeWidth="2.500" />
        <ellipse cx="18" cy="26" rx="2" ry="3" stroke="#3183b8" strokeWidth="2.500" />
      </Icon>
    ),
  },
  { name: '微信', line: 1, icon: <WeChat /> },
  {
    name: '百度网盘', line: 0, icon: (
      <Icon w={28} h={30} c="#1aa3ee" s={3}>
        <rect width="28" height="28" y="1" rx="4" fill="#fff" stroke="none" />
        <circle cx="9.500" cy="17.500" r="4.500" /><circle cx="18.500" cy="17.500" r="4.500" /><circle cx="14" cy="10" r="4" stroke="#f0506a" />
        <path d="M9 27.500h5" stroke="#f0506a" /><path d="M14 27.500h5" />
      </Icon>
    ),
  },
  {
    name: '收藏', line: 0, icon: (
      <Icon w={26} h={30} c="#fff" s={3}>
        <path d="M3 1h20q2 0 2 2v18q0 2-2 2h-4v5l-6-5H3q-2 0-2-2V3q0-2 2-2z" fill="#108cff" stroke="none" />
        <path d="M13 5v14M7 8.500l12 7M19 8.500l-12 7" />
      </Icon>
    ),
  },
  {
    name: '便笺', line: 2, icon: (
      <Icon w={24} h={28} s={0}>
        <path d="M1 3h22v23H1z" fill="#ffe100" /><path d="M13 26l2-9 8 0z" fill="#222" />
      </Icon>
    ),
  },
  { name: 'PowerPoint', line: 1, icon: <Office letter="P" round colors={['#ed6c47', '#ff8f6b', '#d35230', '', '#c43e1c']} /> },
  { name: 'Word', line: 2, icon: <Office letter="W" colors={['#41a5ee', '#2b7cd3', '#185abd', '#103f91', '#185abd']} /> },
  { name: 'Photoshop', line: 0, icon: <Adobe text="Ps" bg="#001d26" fg="#35c2f3" ink="#d5f1fb" /> },
  {
    name: 'Visual Studio', line: 0, icon: (
      <Icon w={30} h={30} s={0}>
        <path d="M1 8l3-2 17 14V10L4 24l-3-2z" fill="#7d49c2" /><path d="M1 8l9 7-9 7z" fill="#52308f" />
        <path d="M21 1l8 3v22l-8 3z" fill="#b58be8" /><path d="M3 23L21 1v9L5 24z" fill="#9463d8" />
      </Icon>
    ),
  },
  { name: 'Premiere', line: 0, icon: <Adobe text="Pr" bg="#2a0634" fg="#c868e8" ink="#d877f0" /> },
  { name: '印象笔记', line: 0, icon: <Evernote /> },
  {
    name: '网易云音乐', line: 1, icon: (
      <Icon w={28} h={30} c="#fff" s={2.2}>
        <rect width="28" height="28" y="1" rx="5" fill="#dd001b" stroke="none" />
        <path d="M18 6c-4-2-5 1-4 4l2 7c0 4-6 4-6 0 0-5 8-6 11-2 3 5-1 10-7 10S5 20 6 15c1-3 3-5 6-6" />
      </Icon>
    ),
  },
  {
    name: 'Typora', line: 1, icon: (
      <Icon w={28} h={28} s={0}>
        <path d="M2 2l23 1-1 10 2 13-23 1 1-12z" fill="#f2f2f0" />
        <T x={14} y={21} size={18} fill="#333" textAnchor="middle" fontFamily="Liberation Serif">T</T>
      </Icon>
    ),
  },
  {
    name: '福昕', line: 1, icon: (
      <Icon w={28} h={30} c="#fff" s={3}>
        <path d="M0 1h22l6 6v22H0z" fill="#6d1e70" stroke="none" />
        <path d="M19 6c-7-3-11 1-11 6s8 7 10 1h-5" />
        <T x={14} y={27} size={8} fill="#fff" fontWeight="700" textAnchor="middle">PDF</T>
      </Icon>
    ),
  },
  { name: '印象笔记', line: 1, icon: <Evernote /> },
  { name: 'Excel', line: 3, icon: <Office letter="X" colors={['#33c481', '#21a366', '#107c41', '#185c37', '#107c41']} /> },
];

const columns = 'ABCDEFGHIJKLMNOPQRS'.split('');
const rowNumbers = Array.from({ length: 27 }, (_, i) => i + 1);
const tabs = ['文件', '开始', '插入', '页面布局', '公式', '数据', '审阅', '视图', '加载项', '帮助'];

export default function App() {
  return (
    <Page>
      <Global />
      <TitleBar>
        <Circuit width="900" height="60" viewBox="0 0 900 60" fill="none" stroke="#22643f" strokeWidth="7">
          <circle cx="43" cy="25" r="6" strokeWidth="5" />
          <path d="M50 25h295M359 25h37l53 36M165 60h175M703 62l14-19h183" />
          <circle cx="352" cy="25" r="6" strokeWidth="5" />
          <circle cx="157" cy="57" r="6" strokeWidth="5" />
          <circle cx="77" cy="68" r="27" strokeWidth="10" />
          <path d="M60 53h29v7H60z" fill="#22643f" stroke="none" />
          <circle cx="519" cy="27" r="46" strokeWidth="11" />
          <path d="M498 6h46v45h-11V27l-28 28-9-10 25-26h-23z" fill="#22643f" stroke="none" />
          <path d="M864 0l-52 61M897 0l-52 61" strokeWidth="9" />
        </Circuit>
        <Row>
          <AutoSave>
            自动保存
            <Toggle><HiddenCheck type="checkbox" aria-label="自动保存" />关</Toggle>
          </AutoSave>
          <Row $left={12}>
            <QuickButton $w={82} aria-label="保存">
              <Icon w={28} h={28} c="#fff"><path d="M1 1h26v26H6l-5-5zM6 1v11h16V1M8 27v-8h12v8M12 23v4" /></Icon>
            </QuickButton>
            <QuickButton $w={84} aria-label="撤消">
              <Icon w={26} h={29} c="#fff"><path d="M1.500 1v11H13M2 12C8 2 13 0 18 2q8 4 6 12-1 3-14 14" /></Icon>
            </QuickButton>
            <QuickButton $w={82} aria-label="恢复">
              <Icon w={26} h={29} c="#fff"><path d="M24.500 1v11H13M24 12C18 2 13 0 8 2q-8 4-6 12 1 3 14 14" /></Icon>
            </QuickButton>
            <QuickButton $w={80} aria-label="自定义">
              <Icon w={8} h={8} c="#fff" s={1}><path d="M0 .500h8" /><path d="M0 3.500h8l-4 4z" fill="#fff" stroke="none" /></Icon>
            </QuickButton>
          </Row>
        </Row>
        <TitleText>工作簿1  -  Excel</TitleText>
        <TitleRight>
          <UserName>bbd</UserName>
          <Avatar>B</Avatar>
          <WindowButton aria-label="功能区显示选项">
            <Icon w={20} h={16} c="#fff" s={1}><path d="M.5.500h19v15H.5zM.5 3.500h19M10 13V6M6 9.500L10 5.500l4 4" /></Icon>
          </WindowButton>
          <WindowButton aria-label="最小化">
            <Icon w={16} h={2} c="#fff" s={1}><path d="M0 1.500h16" /></Icon>
          </WindowButton>
          <WindowButton aria-label="还原">
            <Icon w={16} h={16} c="#fff" s={1}><path d="M.5 3.500h12v12H.5zM3.500 3.500v-3h12v12h-3" /></Icon>
          </WindowButton>
          <WindowButton aria-label="关闭">
            <Icon w={16} h={16} c="#fff" s={1.2}><path d="M0 0l16 16M16 0L0 16" /></Icon>
          </WindowButton>
        </TitleRight>
      </TitleBar>

      <TabBar>
        {tabs.map((t, i) => (
          <TabButton key={t} $on={i === 1} $first={i === 0}>{t}</TabButton>
        ))}
        <SearchButton>
          <Icon w={25} h={25} s={1.6}><circle cx="16" cy="9" r="8" /><path d="M10 15L1 24" /></Icon>
          搜索
        </SearchButton>
        <Spacer />
        <ShareButton>
          <Icon w={21} h={20} c={GREEN} s={1.5}><path d="M4 6H1v13h15v-5M5 13c1-6 4-8 9-8V1l6 6-6 6V9c-4 0-7 1-9 4z" /></Icon>
          共享
        </ShareButton>
        <ShareButton>
          <Icon w={20} h={20} c={GREEN} s={1.5}><path d="M1 1h18v13H8l-4 5v-5H1z" /></Icon>
          批注
        </ShareButton>
      </TabBar>

      <RibbonView />

      <FormulaBar>
        <Field $w={177}>
          <NameInput defaultValue="A1" aria-label="名称框" />
          <Tool $w={32} $h={41} aria-label="名称"><Tri /></Tool>
        </Field>
        <Grip $w={52}><Dots /></Grip>
        <Field $w={192}>
          <Tool $w={62} $h={41} aria-label="取消">
            <Icon w={18} h={18} c="#bdbdbd"><path d="M1 1l16 16M17 1L1 17" /></Icon>
          </Tool>
          <Tool $w={64} $h={41} aria-label="输入">
            <Icon w={20} h={17} c="#c4c4c4" s={3.5}><path d="M1 10l6 5L18 1" /></Icon>
          </Tool>
          <Tool $w={62} $h={41} aria-label="插入函数">
            <Icon w={20} h={26}>
              <T x={1} y={19} size={25} fill="#555" fontStyle="italic" fontFamily="Liberation Serif">f</T>
              <T x={9} y={20} size={20} fill="#555" fontStyle="italic" fontWeight="700" fontFamily="Liberation Serif">x</T>
            </Icon>
          </Tool>
        </Field>
        <Grip $w={4} />
        <Field>
          <FormulaInput defaultValue="输入内容" aria-label="编辑栏" />
          <Tool $w={30} $h={41} aria-label="展开编辑栏">
            <Icon w={12} h={8} c="#666" s={3}><path d="M1 1l5 5 5-5" /></Icon>
          </Tool>
        </Field>
      </FormulaBar>

      <SheetArea>
        <GridClip>
          <Grid>
            <colgroup>
              <col style={{ width: 51 }} />
              {columns.map((c) => <col key={c} style={{ width: 128 }} />)}
              <col />
            </colgroup>
            <thead>
              <tr>
                <CornerHead>
                  <svg width="25" height="25" viewBox="0 0 25 25" aria-hidden="true"><path d="M25 0v25H0z" fill="#b4b4b4" /></svg>
                </CornerHead>
                {columns.map((c) => <ColHead key={c} $on={c === 'A'}>{c}</ColHead>)}
                <ColHead />
              </tr>
            </thead>
            <tbody>
              {rowNumbers.map((n) => (
                <tr key={n}>
                  <RowHead $on={n === 1}>{n}</RowHead>
                  {columns.map((c) => (
                    <Cell key={c} $active={n === 1 && c === 'A'}>{n === 1 && c === 'A' ? '输入内容' : null}</Cell>
                  ))}
                  <Cell />
                </tr>
              ))}
            </tbody>
          </Grid>
        </GridClip>
        <VScroll>
          <ScrollButton aria-label="向上滚动"><ArrowHead d="M0 10h12L6 3z" /></ScrollButton>
          <ScrollThumb />
          <ScrollTrack $h={33} />
          <ScrollButton aria-label="向下滚动"><ArrowHead d="M0 4h12l-6 7z" /></ScrollButton>
        </VScroll>
      </SheetArea>

      <SheetBar>
        <SheetNav>
          <ArrowHead d="M9 1v12L3 7z" c="#c0c0c0" />
          <ArrowHead d="M0 1v12l6-6z" c="#c0c0c0" />
        </SheetNav>
        <SheetTab>Sheet1</SheetTab>
        <AddSheet aria-label="新工作表">
          <Icon w={24} h={24} c="#777" s={1.4}><circle cx="12" cy="12" r="10.500" /><path d="M7 12h10M12 7v10" strokeWidth="2" /></Icon>
        </AddSheet>
        <Spacer />
        <Grip $w={40}><Dots /></Grip>
        <HScroll>
          <ScrollButton aria-label="向左滚动"><ArrowHead d="M9 1v12L2 7z" /></ScrollButton>
          <ScrollThumb />
          <ScrollTrack $w={49} />
          <ScrollButton aria-label="向右滚动"><ArrowHead d="M3 1v12l7-6z" /></ScrollButton>
        </HScroll>
      </SheetBar>

      <StatusBar>
        <StatusText>就绪</StatusText>
        <Spacer />
        <ViewButton $on aria-label="普通">
          <Icon w={31} h={31} c="#666" s={1}><path d="M.5.500h30v30H.5zM.5 10.500h30M.5 20.500h30M10.500.500v30M20.500.500v30" /></Icon>
        </ViewButton>
        <ViewButton aria-label="页面布局">
          <Icon w={34} h={30} c="#666" s={1}><path d="M.5.500h33v29H.5zM8.500 4.500h17v21h-17zM12 8.500h10M12 12.500h10M12 16.500h10M12 20.500h6" /></Icon>
        </ViewButton>
        <ViewButton aria-label="分页预览">
          <Icon w={34} h={32} c="#666" s={1}><path d="M.5.500h33v31H.5zM.5 19.500h20V.500M10.500.500v19" /></Icon>
        </ViewButton>
        <ZoomButton $w={24} aria-label="缩小">
          <Icon w={11} h={3} c="#555" s={3}><path d="M0 1.500h11" /></Icon>
        </ZoomButton>
        <ZoomRange type="range" aria-label="缩放" />
        <ZoomButton $w={26} aria-label="放大">
          <Icon w={14} h={14} c="#666" s={3}><path d="M0 7h14M7 0v14" /></Icon>
        </ZoomButton>
        <ZoomText>100%</ZoomText>
      </StatusBar>

      <TaskBar>
        <TaskButton $w={62} aria-label="开始">
          <Icon w={26} h={28} s={0}><path d="M1 5l10-2v10H1zM12 3l13-2v12H12zM1 14.500h10v10L1 23zM12 14.500h13V27l-13-2z" fill="#fff" /></Icon>
        </TaskButton>
        <TaskButton $w={66} aria-label="Cortana">
          <Icon w={30} h={30} c="#fff" s={3.5}><circle cx="15" cy="15" r="12.500" /></Icon>
        </TaskButton>
        <Row $left={1} />
        {taskApps.map((a, i) => (
          <TaskButton key={i} $on={a.line === 3} aria-label={a.name}>
            {a.icon}
            <Underline $kind={a.line} />
          </TaskButton>
        ))}
        <Spacer />
        <TrayButton $w={42} aria-label="显示隐藏的图标">
          <Icon w={18} h={11} c="#fff" s={1.5}><path d="M1 10l8-8 8 8" /></Icon>
        </TrayButton>
        <TrayButton $w={42} aria-label="微信"><WeChat /></TrayButton>
        <TrayButton $w={42} aria-label="电源">
          <Icon w={28} h={22} c="#fff" s={1.8}>
            <path d="M10 4h15v16H8M27 9v6M4 12v9M1 3v5q0 4 3 4t3-4V3zM2.500 3V0M5.500 3V0" /><path d="M10 7h13v10H10z" fill="#fff" stroke="none" />
          </Icon>
        </TrayButton>
        <TrayButton $w={42} aria-label="网络">
          <Icon w={24} h={24} c="#ddd" s={1.4}>
            <path d="M1 23Q2 3 23 2M6 23Q7 8 23 7M11 23Q12 13 23 12M16 23q1-6 7-6" /><circle cx="21" cy="21" r="1.500" fill="#fff" stroke="none" />
          </Icon>
        </TrayButton>
        <TrayButton $w={40} aria-label="音量">
          <Icon w={26} h={22} c="#ddd" s={1.4}><path d="M1 7v8h4l6 6V1L5 7zM14 8q2 3 0 6M17 5q4 6 0 12M20 2q6 9 0 18" /></Icon>
        </TrayButton>
        <TrayButton $w={42}><InputMode>中</InputMode></TrayButton>
        <TrayButton $w={76}>9:33</TrayButton>
        <TrayButton $w={71} aria-label="通知">
          <Icon w={28} h={28} c="#fff" s={1.6}><path d="M1 1h26v21h-8l-5 5v-5H1z" /></Icon>
        </TrayButton>
        <DesktopPeek aria-label="显示桌面" />
      </TaskBar>

      <Watermark width="490" height="240" viewBox="0 0 490 240" fill="#fff" stroke="#808080" strokeWidth="4" strokeOpacity="0.42" fillOpacity="0.9" strokeLinejoin="round" paintOrder="stroke">
        <g fontFamily="Liberation Sans" fontWeight="700">
          <text x="13" y="159" fontSize="107">Bai</text>
          <ellipse cx="190" cy="73" rx="18" ry="23" />
          <ellipse cx="222" cy="41" rx="17" ry="24" />
          <ellipse cx="263" cy="44" rx="18" ry="23" transform="rotate(10 263 44)" />
          <ellipse cx="288" cy="83" rx="18" ry="23" />
          <path d="M238 76c12 0 18 10 26 22 10 13 32 22 32 42 0 18-14 24-30 22-20-3-34-3-56 0-18 2-29-10-28-26 1-18 20-26 32-38 8-10 12-22 24-22z" />
          <text x="199" y="148" fontSize="62" strokeWidth="7">du</text>
        </g>
        <text x="311" y="152" fontSize="78" fontWeight="900" fontFamily="Noto Sans CJK SC">经验</text>
        <text x="18" y="220" fontSize="52">jingyan.baidu.com</text>
      </Watermark>
    </Page>
  );
}
